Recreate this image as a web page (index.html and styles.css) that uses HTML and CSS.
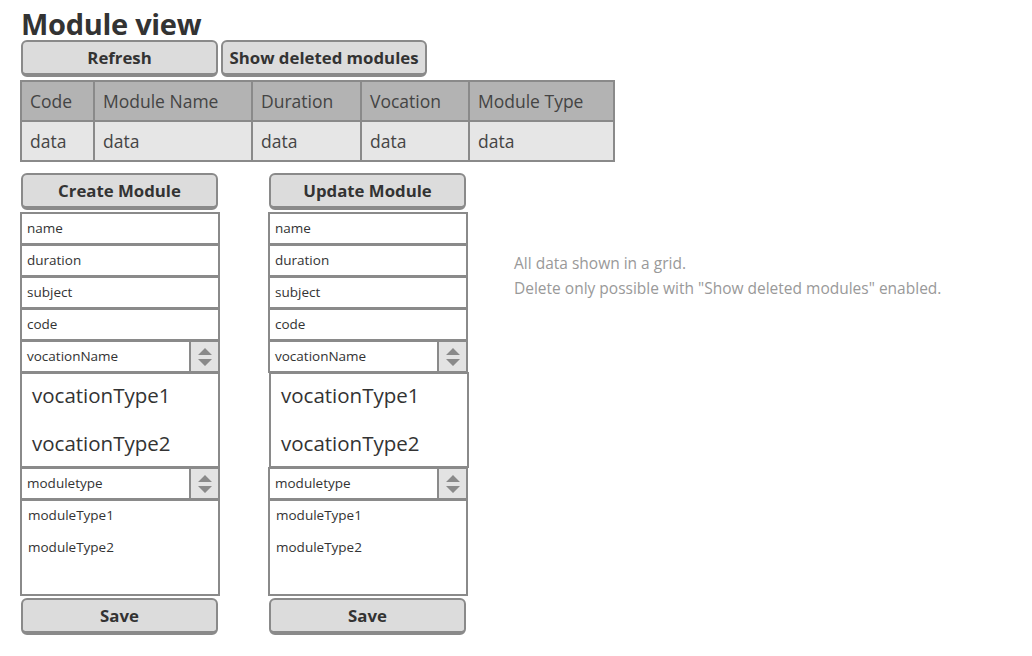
FILE: index.html
```html
<!DOCTYPE html>
<html>
<head>
<meta charset="utf-8">
<link rel="stylesheet" href="styles.css">
</head>
<body>
<div class="page">
  <h1 class="title">Module view</h1>
  <div class="toolbar">
    <button class="btn">Refresh</button>
    <button class="btn btn-wide">Show deleted modules</button>
  </div>
  <table class="grid">
    <tr class="head">
      <td class="c1">Code</td><td class="c2">Module Name</td><td class="c3">Duration</td><td class="c4">Vocation</td><td class="c5">Module Type</td>
    </tr>
    <tr class="row">
      <td>data</td><td>data</td><td>data</td><td>data</td><td>data</td>
    </tr>
  </table>
  <div class="forms">
    <div class="form">
      <button class="btn">Create Module</button>
      <div class="fields">
        <div class="field">name</div>
        <div class="field">duration</div>
        <div class="field">subject</div>
        <div class="field">code</div>
        <div class="field combo"><span class="combo-text">vocationName</span><span class="spin"><svg width="16" height="22" viewBox="0 0 16 22"><path d="M1 9 L8 2 L15 9 Z M1 13 L15 13 L8 20 Z" fill="#8a8a8a"/></svg></span></div>
        <div class="list big"><div>vocationType1</div><div>vocationType2</div></div>
        <div class="field combo"><span class="combo-text">moduletype</span><span class="spin"><svg width="16" height="22" viewBox="0 0 16 22"><path d="M1 9 L8 2 L15 9 Z M1 13 L15 13 L8 20 Z" fill="#8a8a8a"/></svg></span></div>
        <div class="list small"><div>moduleType1</div><div>moduleType2</div></div>
      </div>
      <button class="btn save">Save</button>
    </div>
    <div class="form">
      <button class="btn">Update Module</button>
      <div class="fields">
        <div class="field">name</div>
        <div class="field">duration</div>
        <div class="field">subject</div>
        <div class="field">code</div>
        <div class="field combo"><span class="combo-text">vocationName</span><span class="spin"><svg width="16" height="22" viewBox="0 0 16 22"><path d="M1 9 L8 2 L15 9 Z M1 13 L15 13 L8 20 Z" fill="#8a8a8a"/></svg></span></div>
        <div class="list big shifted"><div>vocationType1</div><div>vocationType2</div></div>
        <div class="field combo"><span class="combo-text">moduletype</span><span class="spin"><svg width="16" height="22" viewBox="0 0 16 22"><path d="M1 9 L8 2 L15 9 Z M1 13 L15 13 L8 20 Z" fill="#8a8a8a"/></svg></span></div>
        <div class="list small"><div>moduleType1</div><div>moduleType2</div></div>
      </div>
      <button class="btn save">Save</button>
    </div>
    <div class="notes">
      <p>All data shown in a grid.</p>
      <p>Delete only possible with "Show deleted modules" enabled.</p>
    </div>
  </div>
</div>
</body>
</html>
```

FILE: styles.css
```css
* { box-sizing: border-box; }
body {
  margin: 0;
  background: #fff;
  font-family: "Open Sans", "Noto Sans", sans-serif;
  color: #333;
}
.page {
  padding: 7px 0 0 20px;
}
.title {
  margin: 0 0 0 1px;
  font-size: 29px;
  font-weight: 700;
  line-height: 33px;
  color: #333;
  letter-spacing: -0.3px;
}
.toolbar {
  display: flex;
  gap: 3px;
  margin-left: 1px;
}
.btn {
  width: 197px;
  height: 37px;
  border: 2px solid #8a8a8a;
  border-bottom-width: 4px;
  border-radius: 6px;
  background: #dcdcdc;
  font-family: "Open Sans", "Noto Sans", sans-serif;
  font-weight: 700;
  font-size: 16.8px;
  color: #333;
  padding: 0;
  line-height: 30px;
}
.btn-wide {
  width: 206px;
}
.grid {
  margin-top: 3px;
  border-collapse: collapse;
  border: 2px solid #8a8a8a;
  font-size: 17.5px;
  color: #444;
}
.grid td {
  border: 2px solid #8a8a8a;
  height: 40px;
  padding: 0 0 0 8px;
  vertical-align: middle;
}
.head td { background: #b3b3b3; }
.row td { background: #e6e6e6; }
.c1 { width: 73px; }
.c2 { width: 158px; }
.c3 { width: 109px; }
.c4 { width: 108px; }
.c5 { width: 145px; }
.forms {
  display: flex;
  margin-top: 11px;
}
.form {
  width: 200px;
  display: flex;
  flex-direction: column;
  margin-right: 48px;
}
.form .btn {
  margin-left: 1px;
}
.fields {
  margin-top: 2px;
  display: flex;
  flex-direction: column;
}
.field {
  height: 33px;
  margin-top: -1px;
  border: 2px solid #8a8a8a;
  background: #fff;
  font-size: 13.5px;
  line-height: 28px;
  padding-left: 5px;
  color: #333;
}
.field:first-child { margin-top: 0; }
.combo {
  display: flex;
  padding-right: 0;
}
.combo-text { flex: 1; }
.spin {
  width: 29px;
  border-left: 2px solid #8a8a8a;
  background: #e3e3e3;
  display: flex;
  align-items: center;
  justify-content: center;
}
.spin svg { display: block; }
.list {
  border: 2px solid #8a8a8a;
  background: #fff;
  margin-top: -1px;
}
.list.big {
  height: 96px;
  font-size: 20.5px;
  padding: 7px 0 0 10px;
  line-height: 1;
}
.list.big div { height: 48px; padding-top: 4px; }
.list.shifted { margin-left: 1px; margin-right: -1px; }
.list.small {
  height: 97px;
  font-size: 13.5px;
  padding: 4px 0 0 6px;
}
.list.small div { height: 32px; line-height: 20px; }
.save {
  margin-top: 2px;
}
.notes {
  padding-top: 80px;
  margin-left: -2px;
  color: #999;
  font-size: 15.5px;
}
.notes p {
  margin: 0 0 5px 0;
  line-height: 20px;
}
```
